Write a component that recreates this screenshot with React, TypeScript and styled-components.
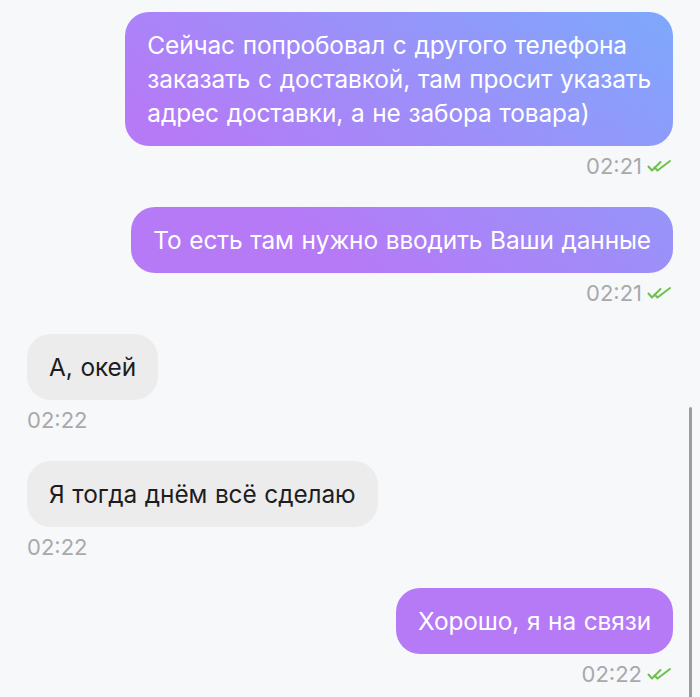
import React from 'react'
import styled, { createGlobalStyle } from 'styled-components'

type Msg = {
  id: number
  out: boolean
  lines: string[]
  time: string
}

const messages: Msg[] = [
  {
    id: 1,
    out: true,
    lines: [
      'Сейчас попробовал с другого телефона',
      'заказать с доставкой, там просит указать',
      'адрес доставки, а не забора товара)',
    ],
    time: '02:21',
  },
  { id: 2, out: true, lines: ['То есть там нужно вводить Ваши данные'], time: '02:21' },
  { id: 3, out: false, lines: ['А, окей'], time: '02:22' },
  { id: 4, out: false, lines: ['Я тогда днём всё сделаю'], time: '02:22' },
  { id: 5, out: true, lines: ['Хорошо, я на связи'], time: '02:22' },
]

const ReadMark = () => (
  <Check width="26" height="14" viewBox="0 0 26 14">
    <path d="M1.5 7.5 L5 11.5 L13.5 3" />
    <path d="M7.5 8.5 L10.5 11.5 L23 2" />
  </Check>
)

const App = () => (
  <>
    <GlobalStyle />
    <Screen>
      <Thread>
        {messages.map((m) => (
          <Message key={m.id} out={m.out}>
            <Bubble out={m.out}>
              {m.lines.map((l, i) => (
                <React.Fragment key={i}>
                  {i > 0 && <br />}
                  {l}
                </React.Fragment>
              ))}
            </Bubble>
            <Meta>
              {m.time}
              {m.out && <ReadMark />}
            </Meta>
          </Message>
        ))}
      </Thread>
      <ScrollThumb />
    </Screen>
  </>
)

export default App

const GlobalStyle = createGlobalStyle`
  html, body {
    margin: 0;
    padding: 0;
    background: #f7f8fa;
  }
  body {
    font-family: Inter, "Noto Sans", "Liberation Sans", sans-serif;
    -webkit-font-smoothing: antialiased;
  }
`

const Screen = styled.div`
  position: relative;
  width: 700px;
  height: 697px;
  overflow: hidden;
  background: #f7f8fa;
`

const Thread = styled.div`
  display: flex;
  flex-direction: column;
  gap: 30px;
  padding: 12px 27px 0;
`

const Message = styled.div<{ out: boolean }>`
  display: flex;
  flex-direction: column;
  align-items: ${(p) => (p.out ? 'flex-end' : 'flex-start')};
`

const Bubble = styled.div<{ out: boolean }>`
  padding: 16px 22px;
  border-radius: 24px;
  font-size: 24.4px;
  line-height: 34px;
  letter-spacing: -0.1px;
  word-spacing: 1px;
  white-space: nowrap;
  color: ${(p) => (p.out ? '#ffffff' : '#1d1d1f')};
  background: ${(p) =>
    p.out
      ? 'linear-gradient(35deg, #b67af7 560px, #7da9fc 950px) fixed'
      : '#ececec'};
`

const Meta = styled.div`
  display: flex;
  align-items: center;
  gap: 5px;
  margin-top: 9px;
  height: 22px;
  font-size: 22px;
  line-height: 22px;
  color: #a9a9ab;
`

const Check = styled.svg`
  fill: none;
  stroke: #6cc24a;
  stroke-width: 2;
  stroke-linecap: round;
  stroke-linejoin: round;
`

const ScrollThumb = styled.div`
  position: absolute;
  top: 407px;
  right: 8px;
  width: 3px;
  height: 300px;
  border-radius: 2px;
  background: #9d9d9f;
`
